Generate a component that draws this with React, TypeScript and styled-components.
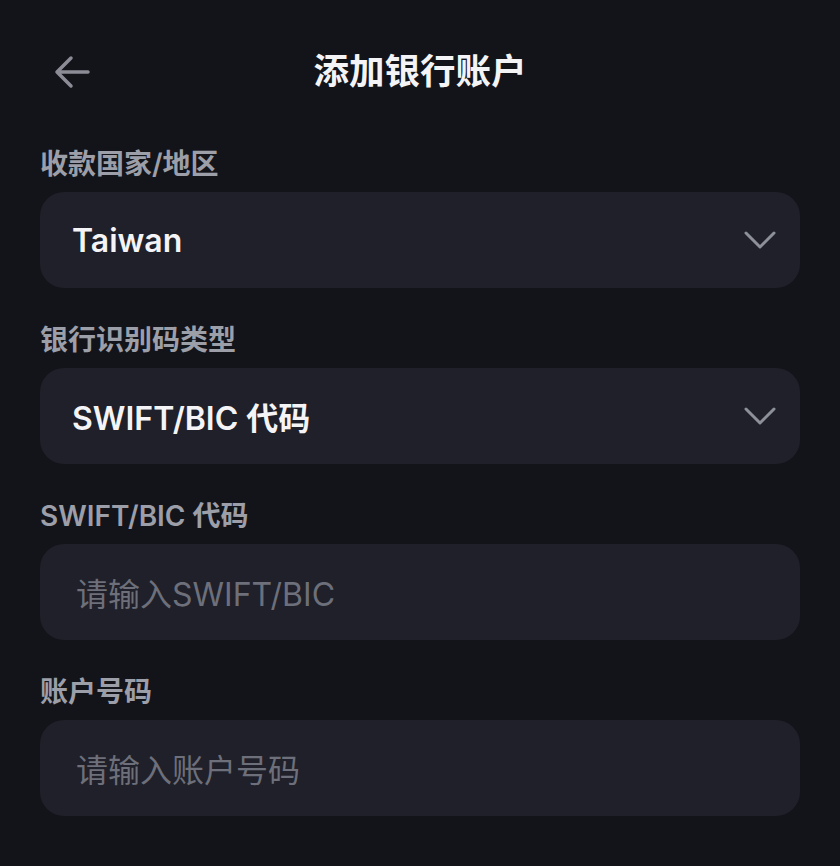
import React from "react";
import styled, { createGlobalStyle } from "styled-components";

const Global = createGlobalStyle`
  html, body { margin: 0; padding: 0; background: #13141a; }
  body { font-family: Inter, "Noto Sans CJK SC", sans-serif; -webkit-font-smoothing: antialiased; }
  * { box-sizing: border-box; }
`;

const Page = styled.div`
  width: 840px;
  min-height: 866px;
  background: #13141a;
  padding: 0 40px;
`;

const Header = styled.header`
  height: 136px;
  margin-bottom: 8px;
  display: grid;
  grid-template-columns: 1fr auto 1fr;
  align-items: center;
`;

const BackButton = styled.button`
  justify-self: start;
  margin: 8px 0 0 12px;
  padding: 0;
  width: 40px;
  height: 40px;
  border: none;
  background: transparent;
  display: flex;
  align-items: center;
  justify-content: center;
  cursor: pointer;
`;

const Title = styled.h1`
  margin: 0;
  font-size: 35.5px;
  font-weight: 700;
  color: #f4f4f7;
  letter-spacing: 0;
`;

const Form = styled.div`
  display: flex;
  flex-direction: column;
  gap: 32px;
`;

const Group = styled.div`
  display: flex;
  flex-direction: column;
  gap: 8px;
`;

const Label = styled.label`
  font-size: 28px;
  line-height: 40px;
  font-weight: 600;
  color: #9c9ea8;
`;

const Field = styled.div`
  height: 96px;
  border-radius: 24px;
  background: #1f2029;
  display: flex;
  align-items: center;
  justify-content: space-between;
  padding: 0 24px 0 32px;
`;

const Value = styled.span<{ $placeholder?: boolean }>`
  font-size: 32px;
  font-weight: ${(p) => (p.$placeholder ? 400 : 600)};
  color: ${(p) => (p.$placeholder ? "#6d6f7a" : "#f4f4f7")};
  padding-left: ${(p) => (p.$placeholder ? "4px" : "0")};
`;

const Chevron = () => (
  <svg width="32" height="32" viewBox="0 0 32 32" fill="none">
    <polyline points="2,9 16,23 30,9" stroke="#8d8f99" strokeWidth="3" strokeLinecap="round" strokeLinejoin="round" />
  </svg>
);

const BackArrow = () => (
  <svg width="40" height="40" viewBox="0 0 40 40" fill="none">
    <path d="M5 20H36M19 6L5 20L19 34" stroke="#8b8c95" strokeWidth="3.5" strokeLinecap="round" strokeLinejoin="round" />
  </svg>
);

const fields = [
  { label: "收款国家/地区", value: "Taiwan", select: true },
  { label: "银行识别码类型", value: "SWIFT/BIC 代码", select: true },
  { label: "SWIFT/BIC 代码", value: "请输入SWIFT/BIC", select: false },
  { label: "账户号码", value: "请输入账户号码", select: false },
];

export default function App() {
  return (
    <>
      <Global />
      <Page>
        <Header>
          <BackButton aria-label="back">
            <BackArrow />
          </BackButton>
          <Title>添加银行账户</Title>
          <span />
        </Header>
        <Form>
          {fields.map((f) => (
            <Group key={f.label}>
              <Label>{f.label}</Label>
              <Field>
                <Value $placeholder={!f.select}>{f.value}</Value>
                {f.select && <Chevron />}
              </Field>
            </Group>
          ))}
        </Form>
      </Page>
    </>
  );
}
